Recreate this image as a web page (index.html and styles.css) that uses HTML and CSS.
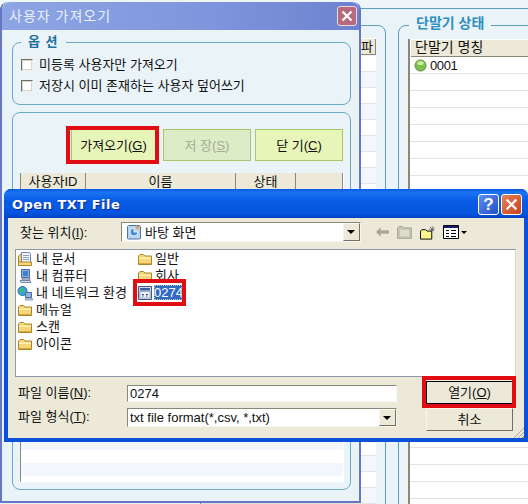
FILE: index.html
```html
<!DOCTYPE html>
<html lang="ko">
<head>
    <meta charset="UTF-8">
    <title>Open TXT File</title>
    <link rel="stylesheet" href="styles.css">
</head>
<body>

<svg class="sprites" width="0" height="0">
    <symbol id="folder" viewBox="0 0 16 16">
        <path d="M1.500 13.500V5L3 3.500h3.500L8 5h6.500v8.500z" fill="#f6d679" stroke="#a8872c"/>
        <path d="M2 6.500h12V8H2z" fill="#fdf0b5"/>
        <path d="M2 12.500h12.500" stroke="#d9a83a"/>
    </symbol>
    <symbol id="docs" viewBox="0 0 16 16">
        <path d="M1.500 14V5L3 3.500h2v10z" fill="#f3d27a" stroke="#a8872c"/>
        <path d="M4.500 1.500h8l1 1v10h-9z" fill="#eef3fa" stroke="#6f86a8"/>
        <path d="M6 4.500h6M6 6.500h6M6 8.500h6" stroke="#8ba2c4"/>
        <path d="M1.500 14.500h13V11h-13z" fill="#f6d679" stroke="#a8872c"/>
    </symbol>
    <symbol id="computer" viewBox="0 0 16 16">
        <path d="M4.500 1.500h8v8h-8z" fill="#8fb4e0" stroke="#4a6a9c"/>
        <path d="M6 3h5v5H6z" fill="#3f7fd0"/>
        <path d="M5 10h8v2H5z" fill="#b9c7dc" stroke="#5b6f90" stroke-width=".6"/>
        <path d="M3 12.500h10l1 2H4z" fill="#d4dce8" stroke="#5b6f90" stroke-width=".8"/>
    </symbol>
    <symbol id="network" viewBox="0 0 16 16">
        <circle cx="5.500" cy="6" r="4.500" fill="#38a8d8" stroke="#2c6f9c"/>
        <path d="M3 3.500l3 1-1 3-2-1zM7 7l2 1-1 2z" fill="#4cb848"/>
        <path d="M8.500 7.500h6v5h-6z" fill="#8fb4e0" stroke="#4a6a9c"/>
        <path d="M9 13h6l.5 2H8.500z" fill="#d4dce8" stroke="#5b6f90" stroke-width=".7"/>
    </symbol>
    <symbol id="desktop" viewBox="0 0 16 16">
        <path d="M2.500 1.500h11l1 1v12l-1 .5h-11l-1-.5v-12z" fill="#b9d3f2" stroke="#4a74ac"/>
        <path d="M8 4a4 4 0 1 0 4 4H8z" fill="#3f8fd8" stroke="#fff" stroke-width=".8"/>
        <path d="M9 3l5-1.500L12 6z" fill="#e8a04a"/>
    </symbol>
    <symbol id="txtfile" viewBox="0 0 16 16">
        <path d="M1.500 1.500h13v13h-13z" fill="#cfd9ea" stroke="#3f5680"/>
        <path d="M3 3h10v2.500H3z" fill="#3f5f9a"/>
        <path d="M3 6.500h10v6.500H3z" fill="#eef2f8" stroke="#6f86a8" stroke-width=".6"/>
        <path d="M5 9.500h2M9 9.500h2M5 11h1.500M9 11h1.500" stroke="#3f5680"/>
    </symbol>
</svg>

<div class="desktop">

    <!-- main program behind the dialogs -->
    <div class="app">
        <div class="app-group app-group-left">
            <div class="grid-head"><span class="grid-head-cell grid-head-last">파</span></div>
            <div class="grid-rows-left"></div>
        </div>
        <fieldset class="app-group app-group-right">
            <legend>단말기 상태</legend>
            <div class="grid-head"><span class="grid-head-cell grid-head-wide">단말기 명칭</span></div>
            <div class="grid-rows-right">
                <div class="terminal-row">
                    <svg class="led" viewBox="0 0 14 14"><circle cx="7" cy="7" r="6" fill="#7fc04a" stroke="#5c8a4a"/><ellipse cx="7" cy="4.500" rx="3.500" ry="2" fill="#cdeea0"/></svg>
                    0001
                </div>
            </div>
        </fieldset>
    </div>

    <!-- import users window -->
    <div class="import-win">
        <div class="import-title">
            <span>사용자 가져오기</span>
            <span class="import-close">
                <svg viewBox="0 0 12 12" width="12" height="12"><path d="M1.500 1.500l9 9M10.500 1.500l-9 9" stroke="#fff" stroke-width="2.200"/></svg>
            </span>
        </div>
        <div class="import-body">
            <fieldset class="options">
                <legend>옵 션</legend>
                <label class="check"><span class="check-box"></span>미등록 사용자만 가져오기</label>
                <label class="check"><span class="check-box"></span>저장시 이미 존재하는 사용자 덮어쓰기</label>
            </fieldset>
            <div class="import-panel">
                <div class="import-buttons">
                    <div class="green-btn green-btn-get">가져오기(<u>G</u>)</div>
                    <div class="green-btn green-btn-off">저 장(<u>S</u>)</div>
                    <div class="green-btn">닫 기(<u>C</u>)</div>
                </div>
                <div class="user-list">
                    <div class="user-head">
                        <span>사용자ID</span>
                        <span>이름</span>
                        <span>상태</span>
                        <span></span>
                    </div>
                    <div class="user-rows"></div>
                </div>
            </div>
        </div>
    </div>

    <!-- open file dialog -->
    <div class="dialog">
        <div class="dialog-title">
            <span class="dialog-title-text">Open TXT File</span>
            <span class="xp-btn xp-help">?</span>
            <span class="xp-btn xp-close">
                <svg viewBox="0 0 12 12" width="13" height="13"><path d="M1.500 1.500l9 9M10.500 1.500l-9 9" stroke="#fff" stroke-width="2"/></svg>
            </span>
        </div>
        <div class="dialog-body">
            <div class="toolbar">
                <span class="look-label">찾는 위치(<u>I</u>):</span>
                <div class="combo look-combo">
                    <svg class="ico" viewBox="0 0 16 16"><use href="#desktop"/></svg>
                    <span class="combo-text">바탕 화면</span>
                    <span class="combo-arrow"></span>
                </div>
                <div class="tools">
                    <svg class="tool tool-back" viewBox="0 0 14 10"><path d="M0 5l5-5v3h9v4H5v3z" fill="#a9a898"/></svg>
                    <svg class="tool tool-up" viewBox="0 0 16 14"><path d="M.5 13.500V2L2 .5h4L7.500 2h8v11.500z" fill="#c4c3b4" stroke="#a9a898"/><path d="M3 4h10v7H3z" fill="#dcdbcd"/></svg>
                    <svg class="tool tool-new" viewBox="0 0 17 15"><path d="M.5 14.500V6L2 4.500h4L7.500 6h5v8.500z" fill="#fbf28c" stroke="#000"/><path d="M13 1v6M10 4h6M11 2l4 4M15 2l-4 4" stroke="#000" stroke-width=".8" stroke-dasharray="1 1"/></svg>
                    <svg class="tool tool-view" viewBox="0 0 16 14"><path d="M.5.5h15v13H.5z" fill="#fff" stroke="#000"/><path d="M1 1h14v2H1z" fill="#16206a"/><path d="M3 5h3v1H3zM8 5h5v1H8zM3 8h3v1H3zM8 8h5v1H8zM3 11h3v1H3zM8 11h5v1H8z" fill="#000"/></svg>
                    <span class="view-arrow"></span>
                </div>
            </div>
            <div class="file-list">
                <div class="file"><svg class="ico" viewBox="0 0 16 16"><use href="#docs"/></svg>내 문서</div>
                <div class="file"><svg class="ico" viewBox="0 0 16 16"><use href="#computer"/></svg>내 컴퓨터</div>
                <div class="file"><svg class="ico" viewBox="0 0 16 16"><use href="#network"/></svg>내 네트워크 환경</div>
                <div class="file"><svg class="ico" viewBox="0 0 16 16"><use href="#folder"/></svg>메뉴얼</div>
                <div class="file"><svg class="ico" viewBox="0 0 16 16"><use href="#folder"/></svg>스캔</div>
                <div class="file"><svg class="ico" viewBox="0 0 16 16"><use href="#folder"/></svg>아이콘</div>
                <div class="file"><svg class="ico" viewBox="0 0 16 16"><use href="#folder"/></svg>일반</div>
                <div class="file"><svg class="ico" viewBox="0 0 16 16"><use href="#folder"/></svg>회사</div>
                <div class="file"><svg class="ico" viewBox="0 0 16 16"><use href="#txtfile"/></svg><span class="file-selected">0274</span></div>
            </div>
            <div class="bottom">
                <span class="field-label field-label-name">파일 이름(<u>N</u>):</span>
                <div class="input">0274</div>
                <div class="xp-button xp-button-default">열기(<u>O</u>)</div>
                <span class="field-label field-label-type">파일 형식(<u>T</u>):</span>
                <div class="combo type-combo">
                    <span class="combo-text">txt file format(*,csv, *,txt)</span>
                    <span class="combo-arrow"></span>
                </div>
                <div class="xp-button">취소</div>
            </div>
            <div class="grip"></div>
        </div>
    </div>

    <!-- red marks drawn over the screenshot -->
    <div class="mark mark-get"></div>
    <div class="mark mark-file"></div>
    <div class="mark mark-open"></div>

</div>

</body>
</html>
```

FILE: styles.css
```css
body {
    margin: 0;
    font-family: 'Liberation Sans', 'Noto Sans CJK KR', sans-serif;
    font-size: 13px;
    line-height: 15px;
    color: #111;
}
.sprites {
    position: absolute;
}
.desktop {
    position: relative;
    width: 528px;
    height: 504px;
    overflow: hidden;
    background-color: #eef6fa;
}
.ico {
    width: 16px;
    height: 16px;
    flex: none;
}

/* Program behind */
.app {
    position: absolute;
    left: 0;
    top: 8px;
    width: 528px;
    height: 496px;
    border-top: 1px solid #5c9db6;
    background-color: #e9f3f8;
}
.app-group {
    position: absolute;
    box-sizing: border-box;
    margin: 0;
    padding: 0;
    border: 1px solid #5c9db6;
    border-radius: 8px 8px 0 0;
}
.app-group-left {
    left: 200px;
    top: 16px;
    width: 186px;
    height: 500px;
}
.app-group-right {
    left: 398px;
    top: 6px;
    width: 150px;
    height: 500px;
}
.app-group-right legend {
    margin-left: 10px;
    padding: 0 7px 4px;
    font-size: 14px;
    line-height: 16px;
    font-weight: bold;
    color: #2e8fc0;
}
.grid-head {
    position: absolute;
    left: 0;
    right: 9px;
    top: 12px;
    height: 17px;
    display: flex;
    justify-content: flex-end;
    background-color: #ece9d8;
    box-shadow: inset 1px 1px 0 #fff, inset -1px -1px 0 #8a8878;
}
.grid-head-cell {
    width: 15px;
    line-height: 17px;
    border-left: 1px solid #8a8878;
}
.app-group-right .grid-head {
    left: 9px;
    right: 0;
    top: 4px;
    height: 18px;
    justify-content: flex-start;
    border-left: 2px solid #8a8878;
}
.grid-head-wide {
    width: auto;
    padding-left: 5px;
    font-size: 14px;
    border: 0;
}
.grid-rows-left {
    position: absolute;
    left: 0;
    right: 9px;
    top: 30px;
    bottom: 0;
    background: repeating-linear-gradient(#fff 0, #fff 15px, #e4e3dc 15px, #e4e3dc 16px, #f3f7fd 16px, #f3f7fd 31px, #e4e3dc 31px, #e4e3dc 32px);
}
.grid-rows-right {
    position: absolute;
    left: 9px;
    right: 0;
    top: 22px;
    bottom: 0;
    border-left: 2px solid #8a8878;
    background: repeating-linear-gradient(#fff 0, #fff 16px, #e4e3dc 16px, #e4e3dc 17px);
}
.terminal-row {
    display: flex;
    align-items: center;
    gap: 3px;
    height: 17px;
    padding-left: 4px;
    letter-spacing: -0.4px;
}
.led {
    width: 13px;
    height: 13px;
}

/* Import users window */
.import-win {
    position: absolute;
    left: 0;
    top: 2px;
    width: 361px;
    height: 501px;
    box-sizing: border-box;
    display: flex;
    flex-direction: column;
    border-radius: 8px 8px 0 0;
    border: 2px solid #6476c4;
    border-top: 0;
    background-color: #e9f3f8;
}
.import-title {
    height: 28px;
    box-sizing: border-box;
    flex: none;
    display: flex;
    align-items: center;
    justify-content: space-between;
    padding: 0 2px 0 7px;
    border-radius: 8px 8px 0 0;
    background: linear-gradient(90deg, #8ea5e4, #7d95dc 60%, #6c82d0);
    color: #eaf0fa;
    font-size: 14px;
    letter-spacing: 1px;
}
.import-close {
    width: 20px;
    height: 20px;
    display: flex;
    align-items: center;
    justify-content: center;
    box-sizing: border-box;
    border: 1px solid #e7d8e4;
    border-radius: 3px;
    background-color: #b9697e;
}
.import-body {
    flex: 1;
    display: flex;
    flex-direction: column;
    gap: 7px;
    padding: 5px 8px 11px 10px;
}
.options {
    height: 70px;
    box-sizing: border-box;
    margin: 0;
    padding: 5px 8px 0;
    display: block;
    border: 1px solid #6aa9c0;
    border-radius: 8px;
}
.options legend {
    margin-left: 0;
    padding: 0 7px;
    line-height: 14px;
    font-weight: bold;
    letter-spacing: 1px;
    color: #1f6f9f;
}
.check {
    display: flex;
    align-items: center;
    gap: 6px;
    height: 21px;
}
.check-box {
    width: 10px;
    height: 10px;
    border: 1px solid;
    border-color: #716f64 #f1efe2 #f1efe2 #716f64;
    outline: 1px solid #d8d6c8;
    outline-offset: -2px;
    background-color: #fff;
}
.import-panel {
    flex: 1;
    box-sizing: border-box;
    padding: 16px 6px 7px 7px;
    display: flex;
    flex-direction: column;
    gap: 12px;
    border: 1px solid #6aa9c0;
    border-radius: 8px;
}
.import-buttons {
    display: flex;
    justify-content: flex-end;
    gap: 4px;
    padding-right: 1px;
}
.green-btn {
    width: 88px;
    height: 32px;
    box-sizing: border-box;
    display: flex;
    align-items: center;
    justify-content: center;
    border: 1px solid #a8c868;
    background-color: #e8f5b9;
}
.green-btn-get {
    width: 85px;
    margin-right: 3px;
}
.green-btn-off {
    color: #a3ad98;
    background-color: #dcecc6;
}
.user-list {
    flex: 1;
    display: flex;
    flex-direction: column;
    border-left: 1px solid #8a8878;
    border-right: 1px solid #fff;
    border-bottom: 1px solid #fff;
}
.user-head {
    display: grid;
    grid-template-columns: 65px 150px 60px 1fr;
    height: 17px;
    background-color: #ece9d8;
    text-align: center;
    line-height: 17px;
}
.user-head span {
    border-right: 1px solid #8a8878;
}
.user-rows {
    flex: 1;
    background: repeating-linear-gradient(#fff 0, #fff 13px, #f3f7fd 13px, #f3f7fd 26px);
}

/* Open file dialog */
.dialog {
    position: absolute;
    left: 4px;
    top: 189px;
    width: 524px;
    height: 253px;
    box-sizing: border-box;
    display: flex;
    flex-direction: column;
    border: 4px solid #0a50d8;
    border-top: 0;
    border-radius: 7px 7px 0 0;
    background-color: #0a50d8;
}
.dialog-title {
    height: 29px;
    box-sizing: border-box;
    flex: none;
    display: flex;
    align-items: center;
    gap: 2px;
    margin: 0 -4px;
    padding: 2px 6px 0 8px;
    border-radius: 7px 7px 0 0;
    background: linear-gradient(#0a5ae0, #1a74f2 12%, #0a5ce6 40%, #0454e0 85%, #0040c0);
}
.dialog-title-text {
    flex: 1;
    font-family: 'DejaVu Sans', sans-serif;
    font-weight: bold;
    letter-spacing: 0.5px;
    color: #fff;
    text-shadow: 1px 1px 0 #0a2a90;
}
.xp-btn {
    width: 21px;
    height: 21px;
    box-sizing: border-box;
    display: flex;
    align-items: center;
    justify-content: center;
    border: 1px solid #fff;
    border-radius: 3px;
}
.xp-help {
    background: linear-gradient(135deg, #5f8df0, #1f50c8);
    color: #fff;
    font-size: 17px;
    font-weight: bold;
}
.xp-close {
    background: linear-gradient(135deg, #e8825c, #c8401c);
}
.dialog-body {
    position: relative;
    flex: 1;
    display: flex;
    flex-direction: column;
    background-color: #ece9d8;
}
.toolbar {
    height: 31px;
    flex: none;
    display: flex;
    align-items: center;
    padding-bottom: 3px;
    box-sizing: border-box;
}
.look-label {
    width: 113px;
    box-sizing: border-box;
    padding-left: 12px;
}
.combo {
    display: flex;
    align-items: center;
    box-sizing: border-box;
    border: 1px solid;
    border-color: #8a8878 #f6f5ee #f6f5ee #8a8878;
    background-color: #fff;
}
.combo-text {
    flex: 1;
    white-space: nowrap;
    overflow: hidden;
}
.look-combo {
    width: 240px;
    height: 20px;
    gap: 3px;
    padding-left: 4px;
}
.combo-arrow {
    position: relative;
    width: 17px;
    height: 100%;
    flex: none;
    box-sizing: border-box;
    border: 1px solid;
    border-color: #f6f5ee #716f64 #716f64 #f6f5ee;
    background-color: #ece9d8;
}
.combo-arrow::after {
    content: "";
    position: absolute;
    left: 3px;
    top: 6px;
    border: 4px solid transparent;
    border-top: 4px solid #000;
    border-bottom: 0;
}
.tools {
    display: flex;
    align-items: center;
    margin-left: 15px;
    height: 16px;
}
.tool-back {
    width: 13px;
    height: 10px;
    margin-right: 8px;
}
.tool-up {
    width: 15px;
    height: 13px;
    margin-right: 8px;
}
.tool-new {
    width: 16px;
    height: 15px;
    margin-right: 7px;
}
.tool-view {
    width: 16px;
    height: 14px;
    margin-right: 2px;
}
.view-arrow {
    border: 3px solid transparent;
    border-top: 3px solid #000;
    border-bottom: 0;
}
.file-list {
    width: 501px;
    height: 128px;
    flex: none;
    box-sizing: border-box;
    margin-left: 7px;
    padding: 0 1px 0 1px;
    display: grid;
    grid-auto-flow: column;
    grid-template-rows: repeat(6, 17px);
    grid-template-columns: 120px 120px;
    border: 1px solid #8c9aa8;
    border-right-color: #dcdacc;
    background-color: #fff;
}
.file {
    display: flex;
    align-items: center;
    gap: 3px;
    white-space: nowrap;
}
.file:nth-child(n+7) {
    gap: 2px;
}
.file-selected {
    width: 28px;
    margin-left: -1px;
    line-height: 15px;
    text-align: center;
    color: #fff;
    background-color: #316ac5;
    outline: 1px dotted #c8c0a8;
    outline-offset: -1px;
}
.bottom {
    display: grid;
    grid-template-columns: 119px 270px 1fr;
    grid-template-rows: 23px 23px;
    row-gap: 4px;
    align-items: start;
    padding-top: 4px;
}
.field-label {
    padding-left: 10px;
}
.field-label-name {
    margin-top: 4px;
}
.field-label-type {
    margin-top: 1px;
}
.input {
    height: 17px;
    box-sizing: border-box;
    margin-top: 4px;
    padding-left: 2px;
    border: 1px solid;
    border-color: #8a8878 #f6f5ee #f6f5ee #8a8878;
    background-color: #fff;
}
.type-combo {
    height: 19px;
    padding-left: 2px;
}
.xp-button {
    width: 87px;
    height: 23px;
    box-sizing: border-box;
    margin-left: 29px;
    display: flex;
    align-items: center;
    justify-content: center;
    border: 1px solid;
    border-color: #f6f5ee #716f64 #716f64 #f6f5ee;
    background-color: #ece9d8;
}
.xp-button-default {
    outline: 1px solid #000;
    outline-offset: -1px;
}
.grip {
    position: absolute;
    right: 0;
    bottom: 0;
    width: 11px;
    height: 11px;
    background: repeating-linear-gradient(135deg, transparent 0, transparent 2px, #a8a698 2px, #a8a698 3px);
    clip-path: polygon(100% 0, 100% 100%, 0 100%);
}

/* Red marks */
.mark {
    position: absolute;
    box-sizing: border-box;
    border: 4px solid #e00d12;
}
.mark-get {
    left: 66px;
    top: 126px;
    width: 93px;
    height: 38px;
}
.mark-file {
    left: 133px;
    top: 279px;
    width: 53px;
    height: 27px;
}
.mark-open {
    left: 422px;
    top: 376px;
    width: 94px;
    height: 32px;
}
```
